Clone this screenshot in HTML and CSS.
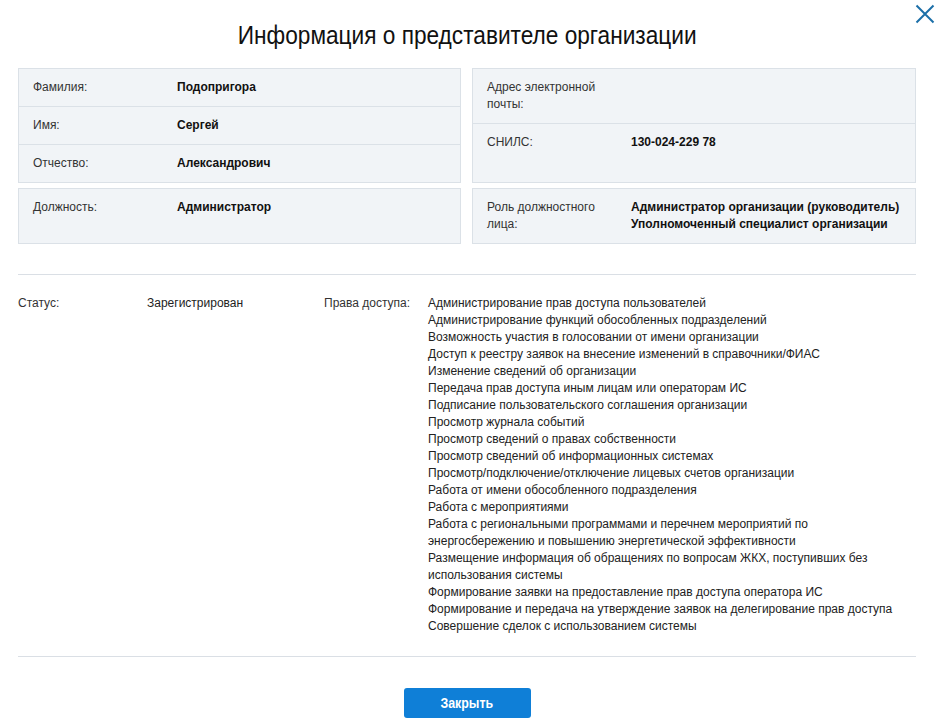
FILE: index.html
```html
<!DOCTYPE html>
<html lang="ru">
<head>
<meta charset="utf-8">
<title>Информация о представителе организации</title>
<link rel="stylesheet" href="styles.css">
</head>
<body>
<div class="modal">
  <button class="close" aria-label="Закрыть">
    <svg width="20" height="20" viewBox="0 0 20 20"><path d="M1.5 1.5 L18.5 18.5 M18.5 1.5 L1.5 18.5" stroke="#1b6fa8" stroke-width="2" fill="none"/></svg>
  </button>
  <h1 class="title"><span class="narrow">Информация о представителе организации</span></h1>
  <div class="cards">
    <div class="card">
      <div class="row"><div class="label">Фамилия:</div><div class="value">Подопригора</div></div>
      <div class="row"><div class="label">Имя:</div><div class="value">Сергей</div></div>
      <div class="row"><div class="label">Отчество:</div><div class="value">Александрович</div></div>
    </div>
    <div class="card">
      <div class="row"><div class="label">Адрес электронной почты:</div><div class="value"></div></div>
      <div class="row grow"><div class="label">СНИЛС:</div><div class="value">130-024-229 78</div></div>
    </div>
    <div class="card">
      <div class="row grow"><div class="label">Должность:</div><div class="value">Администратор</div></div>
    </div>
    <div class="card">
      <div class="row grow"><div class="label">Роль должностного лица:</div><div class="value">Администратор организации (руководитель)<br>Уполномоченный специалист организации</div></div>
    </div>
  </div>
  <div class="details">
    <div class="d-label">Статус:</div>
    <div class="d-value">Зарегистрирован</div>
    <div class="d-label2">Права доступа:</div>
    <ul class="rights">
      <li>Администрирование прав доступа пользователей</li>
      <li>Администрирование функций обособленных подразделений</li>
      <li>Возможность участия в голосовании от имени организации</li>
      <li>Доступ к реестру заявок на внесение изменений в справочники/ФИАС</li>
      <li>Изменение сведений об организации</li>
      <li>Передача прав доступа иным лицам или операторам ИС</li>
      <li>Подписание пользовательского соглашения организации</li>
      <li>Просмотр журнала событий</li>
      <li>Просмотр сведений о правах собственности</li>
      <li>Просмотр сведений об информационных системах</li>
      <li>Просмотр/подключение/отключение лицевых счетов организации</li>
      <li>Работа от имени обособленного подразделения</li>
      <li>Работа с мероприятиями</li>
      <li>Работа с региональными программами и перечнем мероприятий по энергосбережению и повышению энергетической эффективности</li>
      <li>Размещение информация об обращениях по вопросам ЖКХ, поступивших без использования системы</li>
      <li>Формирование заявки на предоставление прав доступа оператора ИС</li>
      <li>Формирование и передача на утверждение заявок на делегирование прав доступа</li>
      <li>Совершение сделок с использованием системы</li>
    </ul>
  </div>
  <div class="footer">
    <button class="btn"><span class="narrow">Закрыть</span></button>
  </div>
</div>
</body>
</html>
```
FILE: styles.css
```css
* { box-sizing: border-box; }
html, body { margin: 0; padding: 0; background: #fff; }
body {
  font-family: "Liberation Sans", Arial, sans-serif;
  font-size: 12px;
  color: #222;
}
.modal {
  position: relative;
  width: 943px;
  padding: 0 27px 0 18px;
}
.close {
  position: absolute;
  top: 3px;
  right: 7px;
  width: 22px;
  height: 22px;
  padding: 1px;
  border: 0;
  background: none;
  cursor: pointer;
}
.close svg { display: block; }
.narrow {
  display: inline-block;
  transform: scaleX(0.885);
}
.title {
  margin: 0;
  padding-top: 19px;
  height: 68px;
  text-align: center;
  font-family: "Liberation Sans", Arial, sans-serif;
  font-weight: normal;
  font-size: 25px;
  line-height: 32px;
  color: #111;
}
.title .narrow { transform: scaleX(0.906); }
.cards {
  display: grid;
  grid-template-columns: 443px 444px;
  column-gap: 11px;
  row-gap: 5px;
}
.card {
  display: flex;
  flex-direction: column;
  background: #f1f4f7;
  border: 1px solid #dbe1e7;
}
.row {
  display: flex;
  padding: 10px 14px 10px;
  line-height: 17px;
  border-top: 1px solid #dbe1e7;
}
.row:first-child { border-top: 0; }
.row.grow { flex: 1; }
.label {
  flex: 0 0 144px;
  padding-right: 20px;
  color: #333;
}
.value {
  flex: 1;
  font-weight: bold;
  color: #111;
}
.details {
  margin-top: 30px;
  border-top: 1px solid #dadfe5;
  border-bottom: 1px solid #dadfe5;
  padding: 20px 0 21px;
  display: grid;
  grid-template-columns: 129px 177px 104px 1fr;
  line-height: 17px;
  color: #222;
}
.d-label, .d-label2 { color: #333; }
.rights {
  list-style: none;
  margin: 0;
  padding: 0;
}
.footer {
  display: flex;
  justify-content: center;
  padding-top: 31px;
}
.btn {
  width: 127px;
  height: 30px;
  border: 0;
  border-radius: 3px;
  background: #0f7fd7;
  color: #fff;
  font-family: "Liberation Sans", Arial, sans-serif;
  font-weight: bold;
  font-size: 14px;
  cursor: pointer;
}
```
